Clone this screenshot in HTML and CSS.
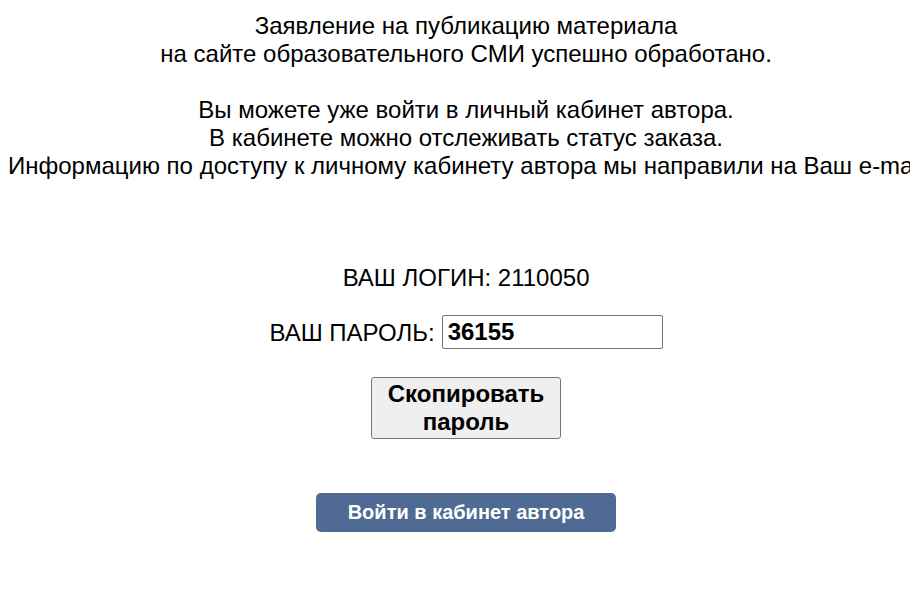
FILE: index.html
```html
<!DOCTYPE html>
<html lang="ru">
<head>
<meta charset="utf-8">
<link rel="stylesheet" href="styles.css">
</head>
<body>
<div class="page">
  <div class="msg">Заявление на публикацию материала<br>на сайте образовательного СМИ успешно обработано.<br><br>Вы можете уже войти в личный кабинет автора.<br>В кабинете можно отслеживать статус заказа.<br>Информацию по доступу к личному кабинету автора мы направили на Ваш e-mail</div>
  <div class="login">ВАШ ЛОГИН: 2110050</div>
  <div class="pass"><span>ВАШ ПАРОЛЬ:</span><input class="pass-input" type="text" value="36155" readonly></div>
  <div class="copy-row"><button class="copy-btn">Скопировать<br>пароль</button></div>
  <div class="enter-row"><a class="enter-btn" href="#">Войти в кабинет автора</a></div>
</div>
</body>
</html>
```
FILE: styles.css
```css
html {
  overflow: hidden;
}
body {
  margin: 8px;
  font-family: "Liberation Sans", Arial, sans-serif;
  font-size: 24px;
  color: #000;
  background: #fff;
}
.page {
  width: max-content;
  text-align: center;
}
.msg {
  line-height: 28px;
  padding-top: 4px;
}
.login {
  margin-top: 84px;
  line-height: 28px;
}
.pass {
  margin-top: 23px;
  line-height: 33px;
  display: flex;
  justify-content: center;
  align-items: center;
  gap: 7px;
}
.pass-input {
  width: 221px;
  height: 34px;
  box-sizing: border-box;
  border: 1px solid #767676;
  border-radius: 2px;
  padding: 1px 5px;
  font-family: "Liberation Sans", Arial, sans-serif;
  font-size: 24px;
  font-weight: bold;
  color: #000;
}
.copy-row {
  margin-top: 28px;
  line-height: 0;
}
.copy-btn {
  width: 190px;
  height: 62px;
  box-sizing: border-box;
  background: #efefef;
  border: 1px solid #767676;
  border-radius: 3px;
  font-family: "Liberation Sans", Arial, sans-serif;
  font-size: 24px;
  font-weight: bold;
  line-height: 28px;
  color: #000;
  padding: 1px 6px;
}
.enter-row {
  margin-top: 54px;
}
.enter-btn {
  display: inline-block;
  width: 300px;
  height: 39px;
  line-height: 39px;
  box-sizing: border-box;
  background: #4f6a93;
  color: #fff;
  border-radius: 5px;
  font-size: 20px;
  font-weight: bold;
  text-decoration: none;
  vertical-align: top;
}
```
